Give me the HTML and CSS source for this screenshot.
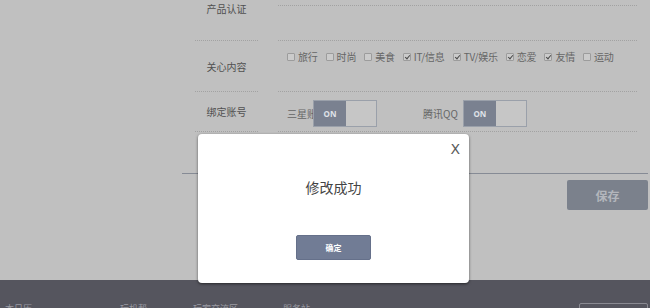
FILE: index.html
```html
<!DOCTYPE html>
<html lang="zh">
<head>
<meta charset="utf-8">
<link rel="stylesheet" href="styles.css">
</head>
<body>
<div class="page">
  <div class="form">
    <div class="row row-cert">
      <div class="label"><span>产品认证</span></div>
      <div class="value"><div class="field-line"></div></div>
    </div>
    <div class="row row-interest">
      <div class="label"><span>关心内容</span></div>
      <div class="value">
        <div class="checks">
          <label class="check"><i class="box"></i>旅行</label>
          <label class="check"><i class="box"></i>时尚</label>
          <label class="check"><i class="box"></i>美食</label>
          <label class="check"><i class="box on"></i>IT/信息</label>
          <label class="check"><i class="box on"></i>TV/娱乐</label>
          <label class="check"><i class="box on"></i>恋爱</label>
          <label class="check"><i class="box on"></i>友情</label>
          <label class="check"><i class="box"></i>运动</label>
        </div>
      </div>
    </div>
    <div class="row row-bind">
      <div class="label"><span>绑定账号</span></div>
      <div class="value">
        <div class="binds">
          <div class="bind">
            <span class="bind-name cut">三星账号</span>
            <div class="toggle"><span class="toggle-on">ON</span><span class="toggle-off"></span></div>
          </div>
          <div class="bind">
            <span class="bind-name">腾讯QQ</span>
            <div class="toggle"><span class="toggle-on">ON</span><span class="toggle-off"></span></div>
          </div>
        </div>
      </div>
    </div>
    <div class="row row-last">
      <div class="label"></div>
      <div class="value"></div>
    </div>
    <div class="actions">
      <button class="save">保存</button>
    </div>
  </div>
  <footer class="footer">
    <span class="f1">本日历</span>
    <span class="f2">玩机帮</span>
    <span class="f3">玩家交流区</span>
    <span class="f4">服务站</span>
    <span class="fbox"></span>
  </footer>

  <div class="modal">
    <span class="close">X</span>
    <p class="msg">修改成功</p>
    <button class="ok">确定</button>
  </div>
</div>
</body>
</html>
```

FILE: styles.css
```css
* { box-sizing: border-box; }
html, body {
  margin: 0;
  padding: 0;
}
body {
  width: 650px;
  height: 308px;
  overflow: hidden;
  background: #c0c0c0;
  font-family: "Noto Sans CJK SC", "Noto Sans", sans-serif;
  color: #555;
}
.page {
  position: relative;
  width: 650px;
  height: 308px;
  overflow: hidden;
}
.form {
  margin-left: 182px;
  width: 466px;
  margin-top: -24px;
}
.row {
  display: grid;
  grid-template-columns: 96px 1fr;
}
.label {
  margin: 0 20px 0 13px;
  border-bottom: 1px dotted #a2a2a2;
  display: flex;
  align-items: center;
  justify-content: center;
  font-size: 10px;
  color: #505050;
}
.value {
  margin-right: 11px;
  border-bottom: 1px dotted #a2a2a2;
}
.row-cert { height: 65px; }
.row-cert .field-line {
  height: 30px;
  border-bottom: 1px dotted #a2a2a2;
}
.row-interest { height: 51px; }
.checks {
  display: flex;
  align-items: center;
  gap: 8px;
  padding: 10px 0 0 9px;
  font-size: 10px;
  color: #666;
  line-height: 11px;
}
.check {
  display: flex;
  align-items: center;
  gap: 3px;
  letter-spacing: -0.2px;
}
.box {
  display: inline-block;
  width: 8px;
  height: 8px;
  border: 1px solid #9c9c9c;
  border-radius: 1px;
  background: #cbcbcb;
  position: relative;
}
.box.on::after {
  content: "";
  position: absolute;
  left: 2px;
  top: 0px;
  width: 2px;
  height: 4px;
  border-right: 1.3px solid #4a4a4a;
  border-bottom: 1.3px solid #4a4a4a;
  transform: rotate(40deg);
}
.row-bind { height: 40px; }
.binds {
  display: flex;
  align-items: center;
  padding: 8px 0 0 9px;
}
.bind {
  display: flex;
  align-items: center;
}
.bind + .bind { margin-left: 46px; }
.bind-name {
  font-size: 10px;
  color: #666;
  white-space: nowrap;
  margin-right: 5px;
}
.bind-name.cut {
  width: 26px;
  overflow: hidden;
  margin-right: 0;
}
.toggle {
  display: flex;
  width: 64px;
  height: 27px;
  border: 1px solid #9aa0aa;
}
.toggle-on {
  width: 32px;
  background: #7a8190;
  color: #dfe2e8;
  font-family: "Open Sans", "Liberation Sans", sans-serif;
  font-weight: 700;
  font-size: 8px;
  display: flex;
  align-items: center;
  justify-content: center;
}
.toggle-off {
  flex: 1;
  background: #c6c6c6;
}
.row-last { height: 42px; }
.row-last .label, .row-last .value { border-bottom: none; }
.row-last {
  border-bottom: 1px solid #868b95;
}
.actions {
  display: flex;
  justify-content: flex-end;
  padding-top: 6px;
}
.save {
  width: 81px;
  height: 30px;
  border: none;
  border-radius: 2px;
  background: #7b818c;
  color: #b3b6bc;
  font-family: "Noto Sans CJK SC", sans-serif;
  font-weight: 700;
  font-size: 12px;
  padding: 0;
}
.footer {
  position: relative;
  margin-top: 70px;
  height: 40px;
  background: #55555e;
  display: flex;
  font-size: 9px;
  color: #9a9aa2;
  padding-top: 23px;
}
.footer span { line-height: 12px; }
.f1 { margin-left: 5px; }
.f2 { margin-left: 88px; }
.f3 { margin-left: 46px; }
.f4 { margin-left: 45px; }
.fbox {
  margin-left: auto;
  margin-right: 2px;
  width: 69px;
  height: 20px;
  margin-top: 0;
  border: 1px solid #8a8a92;
  border-radius: 2px;
}
.modal {
  position: absolute;
  left: 198px;
  top: 134px;
  width: 271px;
  height: 149px;
  background: #fff;
  border-radius: 4px;
  box-shadow: 0 1px 3px rgba(0,0,0,0.55);
  display: flex;
  flex-direction: column;
  align-items: center;
}
.close {
  position: absolute;
  right: 9px;
  top: 7px;
  font-family: "DejaVu Sans", sans-serif;
  font-size: 14px;
  color: #5a5a5a;
}
.msg {
  margin: 44px 0 0 0;
  font-size: 14px;
  color: #444;
  line-height: 18px;
}
.ok {
  margin-top: 39px;
  width: 75px;
  height: 25px;
  border: 1px solid #65708a;
  border-radius: 2px;
  background: #717c95;
  color: #fff;
  font-family: "Noto Sans CJK SC", sans-serif;
  font-size: 8px;
  font-weight: 700;
  padding: 0;
}
```
